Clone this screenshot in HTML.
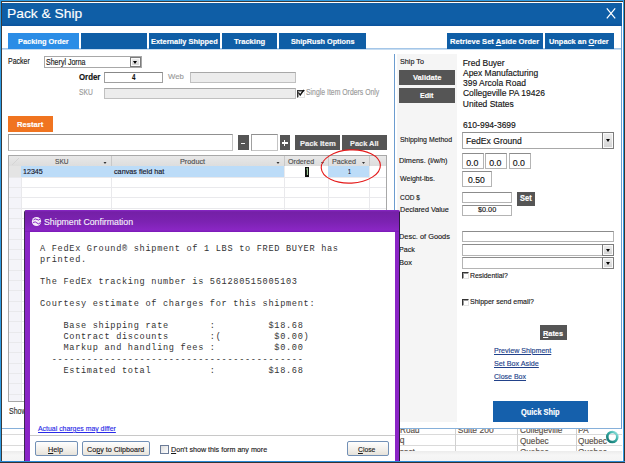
<!DOCTYPE html>
<html><head><meta charset="utf-8"><title>Pack &amp; Ship</title>
<style>
html,body{margin:0;padding:0;}
body{width:625px;height:463px;overflow:hidden;position:relative;background:#fff;font-family:"Liberation Sans",sans-serif;}
.a{position:absolute;box-sizing:border-box;}
.t{position:absolute;white-space:pre;line-height:20px;transform-origin:0 0;font-family:"Liberation Sans",sans-serif;-webkit-text-stroke:0.15px currentColor;}
.tab{position:absolute;top:33px;height:16px;background:#0f5ea6;}
.inp{position:absolute;box-sizing:border-box;background:#fff;border:1px solid #b4b4b4;border-top-color:#8c8c8c;}
.dis{background:#ececec;border-color:#c0c0c0;border-top-color:#a8a8a8;}
.btn{position:absolute;background:#555;}
.dd{position:absolute;box-sizing:border-box;width:11px;background:linear-gradient(#eeeeee,#d2d2d2);border:1px solid #7c7c7c;box-shadow:inset 0 0 0 1px #fafafa;}
.dd:after{content:"";position:absolute;left:50%;top:50%;margin-left:-2.5px;margin-top:-1.5px;border-left:2.5px solid transparent;border-right:2.5px solid transparent;border-top:3px solid #000;}
.mono{position:absolute;left:40px;font-family:"Liberation Mono",monospace;font-size:8.6px;letter-spacing:0.7px;line-height:20px;white-space:pre;color:#333;margin:0;}
.vb{position:absolute;background:#555;}
.cb{position:absolute;box-sizing:border-box;width:8px;height:8px;border-left:1px solid #333;border-top:1px solid #333;border-right:1px solid #e4e4e4;border-bottom:1px solid #e4e4e4;box-shadow:inset 1px 1px 0 #9a9a9a;background:#fff;}
.wbtn{position:absolute;box-sizing:border-box;height:15px;border:1px solid #7290b6;border-radius:2px;background:linear-gradient(#fefefe,#f2efea 60%,#e6e2da);}
</style></head><body>
<!-- frame -->
<div class="a" style="left:0;top:0;width:625px;height:1px;background:#2f9be3"></div>
<div class="a" style="left:0;top:1px;width:625px;height:1px;background:#3a3a3a"></div>
<div class="a" style="left:0;top:0;width:1px;height:463px;background:#2f9be3"></div>
<div class="a" style="left:1px;top:1px;width:1px;height:462px;background:#3a3a3a"></div>
<div class="a" style="left:623px;top:0;width:1px;height:463px;background:#2f9be3"></div>
<div class="a" style="left:624px;top:0;width:1px;height:463px;background:#3a3530"></div>
<div class="a" style="left:0;top:461px;width:625px;height:1px;background:#2a8ad6"></div>
<div class="a" style="left:0;top:462px;width:625px;height:1px;background:#333"></div>
<!-- title bar -->
<div class="a" style="left:2px;top:3px;width:620px;height:23px;background:linear-gradient(#0f5ea6 0,#0f5ea6 20px,#0a529c 23px)"></div>
<svg class="a" style="left:606px;top:8px" width="10" height="11" viewBox="0 0 10 11"><path d="M0.8 0.4 L9.2 10.3 M9.2 0.4 L0.8 10.3" stroke="#fff" stroke-width="1.25" fill="none"/></svg>
<!-- right vertical frame line -->
<div class="a" style="left:621px;top:26px;width:1px;height:403px;background:#6c9ccf"></div>
<!-- tabs -->
<div class="a" style="left:2px;top:48px;width:619px;height:1px;background:#a4c6e8"></div>
<div class="a" style="left:2px;top:49px;width:619px;height:1px;background:#c8ddf1"></div>
<div class="tab" style="left:8px;width:71px;background:#2b8de6"></div>
<div class="tab" style="left:81px;width:66px"></div>
<div class="tab" style="left:149px;width:71px"></div>
<div class="tab" style="left:222px;width:55px"></div>
<div class="tab" style="left:279px;width:87px"></div>
<div class="tab" style="left:447px;width:96px"></div>
<div class="tab" style="left:545px;width:69px"></div>
<!-- left panel -->
<div class="inp" style="left:44px;top:56px;width:98px;height:12px;border-color:#a8a8a8"></div>
<div class="dd" style="left:130px;top:57px;height:10px;width:11px"></div>
<div class="inp" style="left:104px;top:72px;width:59px;height:11px;border-color:#a0a0a0;border-top-color:#888"></div>
<div class="inp dis" style="left:190px;top:72px;width:106px;height:11px"></div>
<div class="inp dis" style="left:104px;top:88px;width:192px;height:11px"></div>
<div class="cb" style="left:297px;top:90px"></div>
<svg class="a" style="left:297px;top:89px" width="8" height="8" viewBox="0 0 8 8"><path d="M1.5 3.5 L3.2 6 L6.8 1" stroke="#111" stroke-width="1.3" fill="none"/></svg>
<div class="a" style="left:8px;top:116px;width:45px;height:16px;background:#f07420"></div>
<div class="inp" style="left:8px;top:134px;width:225px;height:17px;border-color:#c4c4c4;border-top-color:#909090;border-left-color:#a0a0a0"></div>
<div class="btn" style="left:238px;top:135px;width:11px;height:15px"></div>
<div class="a" style="left:241px;top:143px;width:3.5px;height:1.2px;background:#f4f4f4"></div>
<div class="inp" style="left:251px;top:134px;width:27px;height:17px;border-color:#c4c4c4;border-top-color:#909090;border-left-color:#a0a0a0"></div>
<div class="btn" style="left:280px;top:135px;width:10px;height:15px"></div>
<div class="a" style="left:281.5px;top:142px;width:6px;height:1.5px;background:#fff"></div>
<div class="a" style="left:283.75px;top:139.5px;width:1.5px;height:6px;background:#fff"></div>
<div class="btn" style="left:295px;top:135px;width:45px;height:15px"></div>
<div class="btn" style="left:342px;top:135px;width:45px;height:15px"></div>
<!-- grid -->
<div class="a" style="left:8px;top:155px;width:379px;height:247px;border:1px solid #a8a8a8;background:#fff"></div>
<div class="a" style="left:9px;top:156px;width:377px;height:10px;background:linear-gradient(#e8e8e8,#dddddd)"></div>
<div class="a" style="left:9px;top:166px;width:12px;height:235px;background:#f4f4f9"></div>
<!-- grid lines -->
<svg class="a" style="left:9px;top:156px" width="377" height="245" viewBox="0 0 377 245">
<g stroke="#e9e9ec" stroke-width="1">
<line x1="0" y1="21.5" x2="377" y2="21.5"/>
<line x1="0" y1="31.5" x2="377" y2="31.5"/>
<line x1="0" y1="41.5" x2="377" y2="41.5"/>
<line x1="0" y1="52.5" x2="377" y2="52.5"/>
<line x1="0" y1="62.5" x2="377" y2="62.5"/>
<line x1="0" y1="72.5" x2="377" y2="72.5"/>
<line x1="0" y1="83.5" x2="377" y2="83.5"/>
<line x1="0" y1="93.5" x2="377" y2="93.5"/>
<line x1="0" y1="103.5" x2="377" y2="103.5"/>
<line x1="0" y1="114.5" x2="377" y2="114.5"/>
<line x1="0" y1="124.5" x2="377" y2="124.5"/>
<line x1="0" y1="134.5" x2="377" y2="134.5"/>
<line x1="0" y1="145.5" x2="377" y2="145.5"/>
<line x1="0" y1="155.5" x2="377" y2="155.5"/>
<line x1="0" y1="165.5" x2="377" y2="165.5"/>
<line x1="0" y1="176.5" x2="377" y2="176.5"/>
<line x1="0" y1="186.5" x2="377" y2="186.5"/>
<line x1="0" y1="196.5" x2="377" y2="196.5"/>
<line x1="0" y1="207.5" x2="377" y2="207.5"/>
<line x1="0" y1="217.5" x2="377" y2="217.5"/>
<line x1="0" y1="227.5" x2="377" y2="227.5"/>
<line x1="0" y1="238.5" x2="377" y2="238.5"/>
<line x1="12.5" y1="10" x2="12.5" y2="245"/><line x1="102.5" y1="10" x2="102.5" y2="245"/><line x1="275.5" y1="10" x2="275.5" y2="245"/>
<line x1="319.5" y1="10" x2="319.5" y2="245"/><line x1="360.5" y1="10" x2="360.5" y2="245"/>
</g>
<g stroke="#c8c8c8" stroke-width="1">
<line x1="102.5" y1="0" x2="102.5" y2="10"/><line x1="275.5" y1="0" x2="275.5" y2="10"/>
<line x1="319.5" y1="0" x2="319.5" y2="10"/><line x1="360.5" y1="0" x2="360.5" y2="10"/>
</g>
<g fill="#333"><path d="M94.5 6 h3 l-1.5 2 z"/><path d="M267.5 6 h3 l-1.5 2 z"/><path d="M312 6 h3 l-1.5 2 z"/><path d="M353 6 h3 l-1.5 2 z"/></g>
<path d="M3 9 L10 2" stroke="#d4d4d4" stroke-width="1"/>
</svg>
<div class="a" style="left:9px;top:166px;width:12px;height:11px;background:#e4e4e4"></div>
<div class="a" style="left:21px;top:166px;width:263px;height:11px;background:#bcdcf8"></div>
<div class="a" style="left:328px;top:166px;width:41px;height:11px;background:#bcdcf8"></div>
<div class="a" style="left:304.5px;top:167px;width:4.5px;height:9.5px;background:#111"></div>
<svg class="a" style="left:305px;top:167px" width="4" height="9" viewBox="0 0 4 9"><path d="M1.2 2.2 L2.4 1.3 V8" stroke="#a8d8a0" stroke-width="1" fill="none"/></svg>

<!-- red ellipse -->
<svg class="a" style="left:315px;top:144px" width="72" height="46" viewBox="0 0 72 46"><ellipse cx="35.8" cy="22.5" rx="29.6" ry="16.6" transform="rotate(-3 35.8 22.5)" stroke="#e41b1b" stroke-width="1.1" fill="none"/></svg>
<!-- right panel -->
<div class="a" style="left:394px;top:54px;width:1px;height:374px;background:#6c9ccf"></div>
<div class="a" style="left:397px;top:54px;width:60px;height:368px;background:#f5f5f5"></div>
<div class="vb" style="left:399px;top:70px;width:56px;height:15px"></div>
<div class="vb" style="left:399px;top:88px;width:56px;height:15px"></div>
<div class="inp" style="left:462px;top:132px;width:152px;height:17px;border-color:#a8a8a8;border-top-color:#909090"></div>
<div class="dd" style="left:602px;top:132px;height:17px;width:12px"></div>
<div class="inp" style="left:462px;top:153px;width:22px;height:16px"></div>
<div class="inp" style="left:485px;top:153px;width:22px;height:16px"></div>
<div class="inp" style="left:509px;top:153px;width:22px;height:16px"></div>
<div class="inp" style="left:462px;top:171px;width:30px;height:16px"></div>
<div class="inp" style="left:462px;top:192px;width:50px;height:11px"></div>
<div class="vb" style="left:517px;top:192px;width:18px;height:14px"></div>
<div class="inp" style="left:462px;top:205px;width:50px;height:11px"></div>
<div class="inp" style="left:462px;top:231px;width:152px;height:11px"></div>
<div class="inp" style="left:462px;top:244px;width:152px;height:12px"></div>
<div class="dd" style="left:602px;top:244px;height:12px;width:12px"></div>
<div class="inp" style="left:462px;top:257px;width:152px;height:12px"></div>
<div class="dd" style="left:602px;top:257px;height:12px;width:12px"></div>
<div class="cb" style="left:462px;top:272px;width:7px;height:7px"></div>
<div class="cb" style="left:462px;top:299px;width:7px;height:7px"></div>
<div class="vb" style="left:540px;top:325px;width:27px;height:15px"></div>
<div class="a" style="left:493px;top:401px;width:95px;height:21px;background:#1560ac"></div>
<!-- bottom table -->
<div class="a" style="left:2px;top:428px;width:619px;height:1px;background:#86b0da"></div>
<div class="a" style="left:2px;top:434px;width:620px;height:1px;background:#dadada"></div>
<div class="a" style="left:2px;top:445px;width:620px;height:1px;background:#dadada"></div>
<div class="a" style="left:455px;top:429px;width:1px;height:23px;background:#d0d0d0"></div>
<div class="a" style="left:517px;top:429px;width:1px;height:23px;background:#d0d0d0"></div>
<div class="a" style="left:576px;top:429px;width:1px;height:23px;background:#d0d0d0"></div>
<div class="a" style="left:0;top:429px;width:621px;height:22px;overflow:hidden"><div class="a" style="left:0;top:-429px;width:625px;height:463px"><div class="t" style="left:399.66px;top:420px;font-size:8.5px;color:#5a5048;transform:scaleX(0.959);">Road</div>
<div class="t" style="left:457.73px;top:420px;font-size:8.5px;color:#5a5048;">Suite 200</div>
<div class="t" style="left:519.61px;top:420px;font-size:8.5px;color:#5a5048;transform:scaleX(0.974);">Collegeville</div>
<div class="t" style="left:577.94px;top:420px;font-size:8.5px;color:#5a5048;">PA</div>
<div class="t" style="left:399.73px;top:430px;font-size:8.5px;color:#5a5048;">q</div>
<div class="t" style="left:519.62px;top:431px;font-size:8.5px;color:#5a5048;transform:scaleX(0.958);">Quebec</div>
<div class="t" style="left:578.21px;top:431px;font-size:8.5px;color:#5a5048;transform:scaleX(0.971);">Quebec</div>
<div class="t" style="left:519.62px;top:442px;font-size:8.5px;color:#5a5048;transform:scaleX(0.958);">Quebec</div>
<div class="t" style="left:578.21px;top:442px;font-size:8.5px;color:#5a5048;transform:scaleX(0.971);">Quebec</div>
<div class="t" style="left:399.87px;top:442px;font-size:8.5px;color:#5a5048;">ssct</div></div></div>
<div class="a" style="left:2px;top:451px;width:620px;height:10px;background:linear-gradient(#ececec,#f6f6f6 40%,#f4f4f4)"></div>

<svg class="a" style="left:604px;top:429px" width="17" height="17" viewBox="0 0 17 17"><defs><linearGradient id="rg" x1="0" y1="1" x2="1" y2="0"><stop offset="0" stop-color="#0f6f6a"/><stop offset="0.6" stop-color="#3ab0a8"/><stop offset="1" stop-color="#9ee8e4"/></linearGradient></defs><circle cx="8.3" cy="8" r="5" stroke="url(#rg)" stroke-width="2.6" fill="none"/></svg>
<div class="t" style="left:7.02px;top:4px;font-size:13.5px;color:#fff;transform:scaleX(1.022);">Pack &amp; Ship</div>
<div class="t" style="left:17.74px;top:32px;font-size:7.8px;color:#fff;font-weight:bold;transform:scaleX(0.952);">Packing Order</div>
<div class="t" style="left:150.54px;top:32px;font-size:7.8px;color:#fff;font-weight:bold;transform:scaleX(0.950);">Externally Shipped</div>
<div class="t" style="left:234.30px;top:32px;font-size:7.8px;color:#fff;font-weight:bold;transform:scaleX(0.972);">Tracking</div>
<div class="t" style="left:290.79px;top:32px;font-size:7.8px;color:#fff;font-weight:bold;transform:scaleX(0.934);">ShipRush Options</div>
<div class="t" style="left:450.13px;top:32px;font-size:7.8px;color:#fff;font-weight:bold;transform:scaleX(0.974);">Retrieve Set <u>A</u>side Order</div>
<div class="t" style="left:549.45px;top:32px;font-size:7.8px;color:#fff;font-weight:bold;transform:scaleX(0.949);">Unpack an <u>O</u>rder</div>
<div class="t" style="left:8.25px;top:51px;font-size:8.6px;color:#1a1a1a;transform:scaleX(0.814);">Packer</div>
<div class="t" style="left:45.68px;top:52px;font-size:8.4px;color:#1a1a1a;transform:scaleX(0.841);">Sheryl Jorna</div>
<div class="t" style="left:78.95px;top:68px;font-size:8.2px;color:#111;font-weight:bold;transform:scaleX(0.961);">Order</div>
<div class="t" style="left:131.50px;top:67px;font-size:8.4px;color:#111;font-weight:bold;transform:scaleX(0.741);">4</div>
<div class="t" style="left:168.30px;top:67px;font-size:8.0px;color:#9a9a9a;transform:scaleX(0.970);">Web</div>
<div class="t" style="left:78.99px;top:83px;font-size:8.2px;color:#9a9a9a;transform:scaleX(0.822);">SKU</div>
<div class="t" style="left:306.19px;top:82px;font-size:8.6px;color:#9a9a9a;transform:scaleX(0.799);">Single Item Orders Only</div>
<div class="t" style="left:16.82px;top:115px;font-size:7.8px;color:#fff;font-weight:bold;transform:scaleX(0.983);">Restart</div>
<div class="t" style="left:299.52px;top:134px;font-size:7.8px;color:#f0f0f0;font-weight:bold;transform:scaleX(0.981);">Pack Item</div>
<div class="t" style="left:349.54px;top:134px;font-size:7.8px;color:#f0f0f0;font-weight:bold;transform:scaleX(0.952);">Pack All</div>
<div class="t" style="left:54.59px;top:152px;font-size:7.6px;color:#505050;transform:scaleX(0.866);">SKU</div>
<div class="t" style="left:180.03px;top:152px;font-size:7.6px;color:#505050;transform:scaleX(0.960);">Product</div>
<div class="t" style="left:288.27px;top:152px;font-size:7.6px;color:#505050;transform:scaleX(0.937);">Ordered</div>
<div class="t" style="left:332.04px;top:152px;font-size:7.6px;color:#505050;transform:scaleX(0.945);">Packed</div>
<div class="t" style="left:23.06px;top:162px;font-size:7.6px;color:#141428;transform:scaleX(0.934);">12345</div>
<div class="t" style="left:113.57px;top:162px;font-size:7.6px;color:#141428;transform:scaleX(0.954);">canvas field hat</div>
<div class="t" style="left:348.27px;top:162px;font-size:7.6px;color:#141428;transform:scaleX(0.697);">1</div>
<div class="t" style="left:8.78px;top:401px;font-size:8.6px;color:#333;transform:scaleX(0.820);">Show</div>
<div class="t" style="left:399.77px;top:52px;font-size:8.0px;color:#1a1a1a;transform:scaleX(0.900);">Ship To</div>
<div class="t" style="left:412.50px;top:68px;font-size:7.8px;color:#fff;font-weight:bold;transform:scaleX(0.966);">Validate</div>
<div class="t" style="left:419.85px;top:86px;font-size:7.8px;color:#fff;font-weight:bold;transform:scaleX(0.915);">Edit</div>
<div class="t" style="left:462.64px;top:53px;font-size:8.5px;color:#141414;">Fred Buyer</div>
<div class="t" style="left:463.30px;top:63px;font-size:8.5px;color:#141414;transform:scaleX(0.994);">Apex Manufacturing</div>
<div class="t" style="left:463.03px;top:73px;font-size:8.5px;color:#141414;">399 Arcola Road</div>
<div class="t" style="left:462.90px;top:83px;font-size:8.5px;color:#141414;">Collegeville PA 19426</div>
<div class="t" style="left:462.77px;top:94px;font-size:8.5px;color:#141414;">United States</div>
<div class="t" style="left:462.90px;top:115px;font-size:8.5px;color:#141414;">610-994-3699</div>
<div class="t" style="left:399.78px;top:130px;font-size:8.0px;color:#1a1a1a;transform:scaleX(0.866);">Shipping Method</div>
<div class="t" style="left:465.73px;top:131px;font-size:8.8px;color:#141414;transform:scaleX(0.976);">FedEx Ground</div>
<div class="t" style="left:399.43px;top:151px;font-size:8.0px;color:#1a1a1a;transform:scaleX(0.910);">Dimens. (l/w/h)</div>
<div class="t" style="left:466.13px;top:153px;font-size:8.8px;color:#141414;">0.0</div>
<div class="t" style="left:489.13px;top:153px;font-size:8.8px;color:#141414;">0.0</div>
<div class="t" style="left:512.63px;top:153px;font-size:8.8px;color:#141414;">0.0</div>
<div class="t" style="left:400.00px;top:169px;font-size:8.0px;color:#1a1a1a;transform:scaleX(0.876);">Weight-lbs.</div>
<div class="t" style="left:468.33px;top:170px;font-size:8.8px;color:#141414;transform:scaleX(0.980);">0.50</div>
<div class="t" style="left:400.00px;top:188px;font-size:8.0px;color:#1a1a1a;transform:scaleX(0.808);">COD $</div>
<div class="t" style="left:520.38px;top:189px;font-size:8.2px;color:#fff;font-weight:bold;transform:scaleX(0.913);">Set</div>
<div class="t" style="left:399.74px;top:200px;font-size:8.0px;color:#1a1a1a;transform:scaleX(0.903);">Declared Value</div>
<div class="t" style="left:478.00px;top:200px;font-size:8.0px;color:#141414;transform:scaleX(0.908);">$0.00</div>
<div class="t" style="left:398.82px;top:227px;font-size:8.0px;color:#1a1a1a;transform:scaleX(0.923);">Desc. of Goods</div>
<div class="t" style="left:399.04px;top:240px;font-size:8.0px;color:#1a1a1a;transform:scaleX(0.891);">Pack</div>
<div class="t" style="left:399.01px;top:253px;font-size:8.0px;color:#1a1a1a;transform:scaleX(0.942);">Box</div>
<div class="t" style="left:470.26px;top:266px;font-size:8.0px;color:#1a1a1a;transform:scaleX(0.861);">Residential?</div>
<div class="t" style="left:470.18px;top:292px;font-size:8.0px;color:#1a1a1a;transform:scaleX(0.877);">Shipper send email?</div>
<div class="t" style="left:542.84px;top:324px;font-size:7.8px;color:#fff;font-weight:bold;transform:scaleX(0.944);"><u>R</u>ates</div>
<div class="t" style="left:493.55px;top:341px;font-size:8.0px;color:#22428a;transform:scaleX(0.888);text-decoration:underline;">Preview Shipment</div>
<div class="t" style="left:493.88px;top:354px;font-size:8.0px;color:#22428a;transform:scaleX(0.900);text-decoration:underline;">Set Box Aside</div>
<div class="t" style="left:493.77px;top:367px;font-size:8.0px;color:#22428a;transform:scaleX(0.878);text-decoration:underline;">Close Box</div>
<div class="t" style="left:521.47px;top:403px;font-size:8.2px;color:#fff;font-weight:bold;transform:scaleX(0.901);">Quick Ship</div>
<!-- dialog -->
<div class="a" style="left:24px;top:210px;width:376px;height:252px;background:#8a24c6;border-left:1px solid #3a2a50;border-radius:3px 3px 0 0"></div>
<div class="a" style="left:25px;top:210px;width:375px;height:22px;background:linear-gradient(#8a28c8 0px,#7420a6 2px,#7c22b2 12px,#8a26c4 20px,#7a18b8 22px);border-radius:2px 2px 0 0"></div>
<div class="a" style="left:30px;top:232px;width:365px;height:229px;background:#fff"></div>
<div class="a" style="left:399px;top:212px;width:1px;height:250px;background:#2c1c40"></div>
<svg class="a" style="left:31px;top:216px" width="11" height="11" viewBox="0 0 11 11">
<circle cx="5.5" cy="5.5" r="4.6" fill="#fff" opacity="0.9"/>
<path d="M2.5 4 Q4 2 6 3.5 T9 3 M2 6.5 Q4.5 5 6 7 T9.5 6.5" stroke="#8a26c4" stroke-width="1" fill="none"/>
</svg>
<div class="mono" style="top:239px">A FedEx Ground® shipment of 1 LBS to FRED BUYER has</div>
<div class="mono" style="top:250px">printed.</div>
<div class="mono" style="top:272px">The FedEx tracking number is 561280515005103</div>
<div class="mono" style="top:294px">Courtesy estimate of charges for this shipment:</div>
<div class="mono" style="top:316px">    Base shipping rate       :         $18.68</div>
<div class="mono" style="top:327px">    Contract discounts       :(         $0.00)</div>
<div class="mono" style="top:338px">    Markup and handling fees :          $0.00</div>
<div class="mono" style="top:350px">  -------------------------------------------</div>
<div class="mono" style="top:361px">    Estimated total          :         $18.68</div>
<div class="a" style="left:30px;top:435px;width:365px;height:1px;background:#c8c8c8"></div>
<div class="wbtn" style="left:35px;top:441px;width:43px"></div>
<div class="wbtn" style="left:82px;top:441px;width:68px"></div>
<div class="a" style="left:160px;top:445px;width:9px;height:9px;border:1px solid #6c7c98;background:linear-gradient(135deg,#dcdcdc,#fff)"></div>
<div class="wbtn" style="left:347px;top:441px;width:42px"></div>
<div class="t" style="left:43.93px;top:212px;font-size:9.6px;color:#f4eefa;transform:scaleX(0.912);">Shipment Confirmation</div>
<div class="t" style="left:38.10px;top:419px;font-size:8.0px;color:#2a2ae8;transform:scaleX(0.864);text-decoration:underline;">Actual charges may differ</div>
<div class="t" style="left:48.23px;top:440px;font-size:8.0px;color:#1a1a1a;transform:scaleX(0.909);"><u>H</u>elp</div>
<div class="t" style="left:86.66px;top:440px;font-size:8.0px;color:#1a1a1a;transform:scaleX(0.894);">Co<u>p</u>y to Clipboard</div>
<div class="t" style="left:171.44px;top:440px;font-size:8.0px;color:#1a1a1a;transform:scaleX(0.892);"><u>D</u>on&#x27;t show this form any more</div>
<div class="t" style="left:358.28px;top:440px;font-size:8.0px;color:#1a1a1a;transform:scaleX(0.845);"><u>C</u>lose</div>
<!-- frame overlay bottom -->
<div class="a" style="left:0;top:461px;width:625px;height:1px;background:#2a8ad6"></div>
<div class="a" style="left:0;top:462px;width:625px;height:1px;background:#333"></div>

</body></html>
